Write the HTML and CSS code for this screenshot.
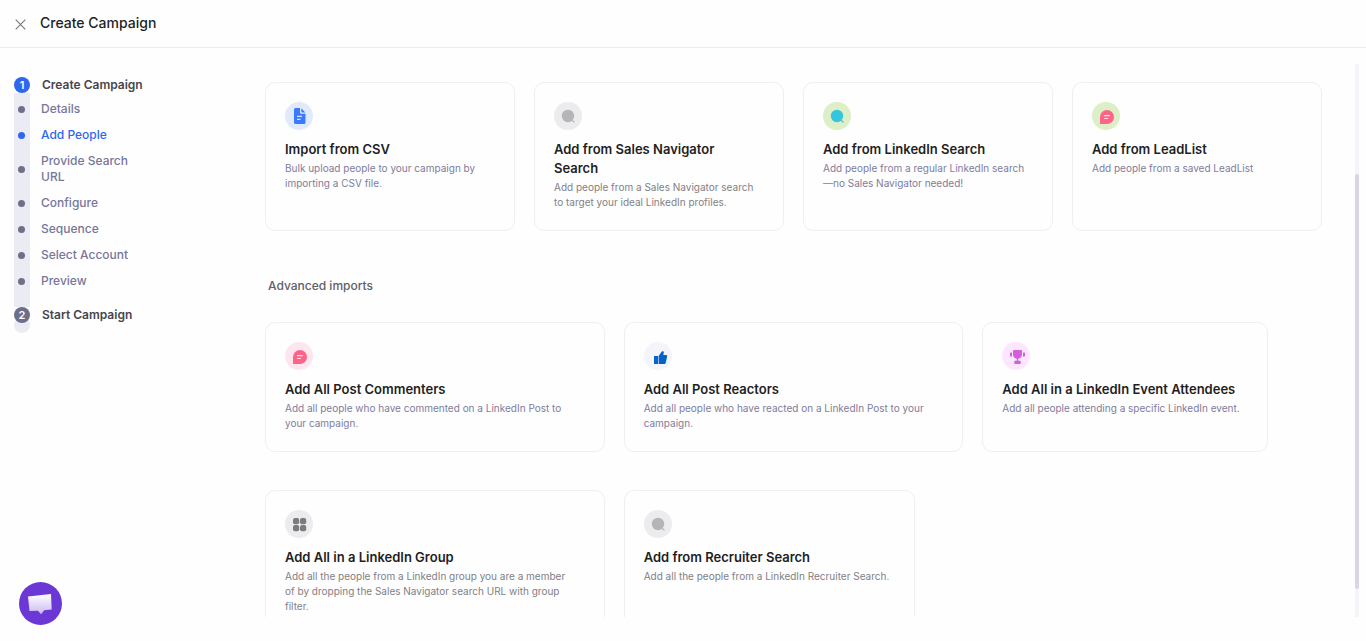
FILE: index.html
```
<!DOCTYPE html>
<html lang="en">

<head>
    <meta charset="UTF-8">
    <meta name="viewport" content="width=device-width, initial-scale=1.0">
    <title>Create Campaign</title>
    <link rel="stylesheet" href="styles.css">
</head>

<body>

    <header class="header">
        <button class="close-btn" aria-label="Close">
            <svg width="11" height="11" viewBox="0 0 11 11" fill="none" stroke="#77777c" stroke-width="1.1"><path d="M.7.7l9.6 9.6M10.3.7L.7 10.3"/></svg>
        </button>
        <h1 class="header-title">Create Campaign</h1>
    </header>

    <div class="layout">
        <nav class="steps">
            <div class="step"><span class="step-number active">1</span>Create Campaign</div>
            <ul class="step-list">
                <li><a class="step-link" href="#details">Details</a></li>
                <li><a class="step-link active" href="#people">Add People</a></li>
                <li><a class="step-link" href="#search-url">Provide Search URL</a></li>
                <li><a class="step-link" href="#configure">Configure</a></li>
                <li><a class="step-link" href="#sequence">Sequence</a></li>
                <li><a class="step-link" href="#account">Select Account</a></li>
                <li><a class="step-link" href="#preview">Preview</a></li>
            </ul>
            <div class="step step-last"><span class="step-number">2</span>Start Campaign</div>
        </nav>

        <main class="content">
            <div class="cards cards-basic">
                <button class="card">
                    <span class="icon icon-blue">
                        <svg width="28" height="28" viewBox="0 0 28 28"><path fill="#3b7afc" d="M10.5 6H15v4.2c0 .9.6 1.500 1.500 1.500H20.500V20.500a1.500 1.500 0 0 1-1.500 1.500h-8.500A1.500 1.500 0 0 1 9 20.500v-13A1.500 1.500 0 0 1 10.500 6z"/><path fill="#3b7afc" d="M16.300 6.300L20.300 10.400H17.200a.9.9 0 0 1-.9-.9z"/><path stroke="#d5e2ff" stroke-width="1.200" d="M12 14.300h5M12 17.300h3.500"/></svg>
                    </span>
                    <span class="card-title">Import from CSV</span>
                    <span class="card-text">Bulk upload people to your campaign by importing a CSV file.</span>
                </button>
                <button class="card">
                    <span class="icon icon-gray">
                        <svg width="28" height="28" viewBox="0 0 28 28"><circle cx="14" cy="14" r="6.200" fill="#b5b4b7"/><path stroke="#b5b4b7" stroke-width="1.200" stroke-linecap="round" d="M18.600 18.600l1.400 1.400"/></svg>
                    </span>
                    <span class="card-title">Add from Sales Navigator<br>Search</span>
                    <span class="card-text gray">Add people from a Sales Navigator search to target your ideal LinkedIn profiles.</span>
                </button>
                <button class="card">
                    <span class="icon icon-green">
                        <svg width="28" height="28" viewBox="0 0 28 28"><circle cx="14" cy="14" r="6.200" fill="#35c5dd"/><path stroke="#35c5dd" stroke-width="1.200" stroke-linecap="round" d="M18.600 18.600l1.400 1.400"/></svg>
                    </span>
                    <span class="card-title">Add from LinkedIn Search</span>
                    <span class="card-text">Add people from a regular LinkedIn search<br>—no Sales Navigator needed!</span>
                </button>
                <button class="card">
                    <span class="icon icon-green">
                        <svg width="28" height="28" viewBox="0 0 28 28"><path fill="#fd6488" d="M8 22v-7a7 7 0 1 1 7 7z"/><path stroke="#ffdbe4" stroke-width="1.200" stroke-linecap="round" d="M12.500 13.700h5M12.500 16.500h3"/></svg>
                    </span>
                    <span class="card-title">Add from LeadList</span>
                    <span class="card-text">Add people from a saved LeadList</span>
                </button>
            </div>

            <h2 class="section-title">Advanced imports</h2>

            <div class="cards cards-advanced">
                <button class="card">
                    <span class="icon icon-pink">
                        <svg width="28" height="28" viewBox="0 0 28 28"><path fill="#fd6488" d="M8 22v-7a7 7 0 1 1 7 7z"/><path stroke="#ffdbe4" stroke-width="1.200" stroke-linecap="round" d="M12.500 13.700h5M12.500 16.500h3"/></svg>
                    </span>
                    <span class="card-title">Add All Post Commenters</span>
                    <span class="card-text">Add all people who have commented on a LinkedIn Post to your campaign.</span>
                </button>
                <button class="card">
                    <span class="icon icon-light">
                        <svg width="28" height="28" viewBox="0 0 28 28" fill="#0464c8"><path d="M10 14h4v8h-3.500a.5.5 0 0 1-.5-.5z"/><path d="M14.600 14l3-4.200c.6-.8 2.400-.5 2.200.7l-.5 2.500h2.700c.9 0 1.300.6 1.100 1.400l-1.300 6.300c-.2.8-.8 1.300-1.600 1.300h-5.600z"/></svg>
                    </span>
                    <span class="card-title">Add All Post Reactors</span>
                    <span class="card-text">Add all people who have reacted on a LinkedIn Post to your campaign.</span>
                </button>
                <button class="card card-event">
                    <span class="icon icon-purple">
                        <svg width="28" height="28" viewBox="0 0 28 28" fill="#d65ddc"><path d="M12 8h7a1 1 0 0 1 1 1v3.500a4.500 4.300 0 0 1-9 0V9a1 1 0 0 1 1-1z"/><path d="M8.700 10.500H10v4H8.700a.7.7 0 0 1-.7-.7v-2.600a.7.7 0 0 1 .7-.7zM21 10.500h1.300a.7.7 0 0 1 .7.7v2.600a.7.7 0 0 1-.7.7H21zM14.800 16h1.400v3.500h-1.400z"/><rect x="12.300" y="18.800" width="6.400" height="3.200" rx=".8"/></svg>
                    </span>
                    <span class="card-title">Add All in a LinkedIn Event Attendees</span>
                    <span class="card-text">Add all people attending a specific LinkedIn event.</span>
                </button>
                <button class="card">
                    <span class="icon icon-gray">
                        <svg width="28" height="28" viewBox="0 0 28 28" fill="#7b7a7c"><rect x="8" y="8" width="6.200" height="6.200" rx="2"/><rect x="15" y="8" width="6.200" height="6.200" rx="2"/><rect x="8" y="15" width="6.200" height="6.200" rx="2"/><rect x="15" y="15" width="6.200" height="6.200" rx="2"/></svg>
                    </span>
                    <span class="card-title">Add All in a LinkedIn Group</span>
                    <span class="card-text gray">Add all the people from a LinkedIn group you are a member<br>of by dropping the Sales Navigator search URL with group<br>filter.</span>
                </button>
                <button class="card card-recruiter">
                    <span class="icon icon-gray">
                        <svg width="28" height="28" viewBox="0 0 28 28"><circle cx="14" cy="14" r="6.200" fill="#b5b4b7"/><path stroke="#b5b4b7" stroke-width="1.200" stroke-linecap="round" d="M18.600 18.600l1.400 1.400"/></svg>
                    </span>
                    <span class="card-title">Add from Recruiter Search</span>
                    <span class="card-text gray">Add all the people from a LinkedIn Recruiter Search.</span>
                </button>
            </div>
        </main>

        <div class="scroll-track">
            <div class="scroll-thumb"></div>
        </div>
    </div>

    <button class="chat-btn" aria-label="Open chat">
        <svg width="43" height="43" viewBox="0 0 43 43">
            <defs>
                <linearGradient id="bubble" x1="0" y1="0" x2="0" y2="1">
                    <stop offset="0" stop-color="#fff"/>
                    <stop offset="1" stop-color="#cbb9f2"/>
                </linearGradient>
            </defs>
            <path fill="url(#bubble)" d="M9 14.500L32 12l.7 15.500-7.500.8-3.200 4-3-3.500-8.500.2z"/>
        </svg>
    </button>

</body>

</html>
```
FILE: styles.css
```
* {
    box-sizing: border-box;
}

body,
html {
    height: 100%;
    margin: 0;
}

body {
    display: flex;
    flex-direction: column;
    overflow: hidden;
    background-color: #fefefe;
    color: #1f1f24;
    font-family: Inter, Arial, sans-serif;
}

button {
    font-family: inherit;
    color: inherit;
    background: none;
    border: none;
    padding: 0;
    cursor: pointer;
}

.header {
    display: flex;
    align-items: center;
    gap: 14px;
    height: 48px;
    padding: 0 15px;
    border-bottom: 1px solid #ebebed;
    flex-shrink: 0;
}

.close-btn {
    display: flex;
    padding-top: 2px;
}

.header-title {
    margin: 0 0 2px;
    font-size: 14px;
    font-weight: 500;
}

.layout {
    display: flex;
    flex: 1;
    min-height: 0;
    padding-bottom: 24px;
}

/* Left steps */
.steps {
    width: 265px;
    flex-shrink: 0;
    padding: 29px 0 0 14px;
    font-size: 12px;
    line-height: 16px;
    font-weight: 500;
}

.step {
    display: flex;
    align-items: center;
    gap: 12px;
    color: #47464e;
    font-weight: 600;
}

.step-last {
    align-items: flex-start;
}

/* rounded end of the rail under the last number */
.step-last .step-number {
    box-shadow: 0 10px 0 #ebecf3;
}

.step-number {
    width: 16px;
    height: 16px;
    border-radius: 50%;
    background-color: #6b6f8c;
    color: #fff;
    font-size: 11px;
    text-align: center;
}

.step-number.active {
    background-color: #2f66f0;
}

.step-list {
    display: flex;
    flex-direction: column;
    gap: 10px;
    margin: 0;
    padding: 8px 0 18px;
    list-style: none;
    background: linear-gradient(#ebecf3, #ebecf3) no-repeat 0 0 / 16px 100%;
}

.step-link {
    display: flex;
    align-items: center;
    gap: 16px;
    width: 130px;
    padding-left: 4px;
    color: #77769a;
    text-decoration: none;
}

.step-link::before {
    content: "";
    width: 7px;
    height: 7px;
    flex-shrink: 0;
    border-radius: 50%;
    background-color: #6f6f8a;
}

.step-link.active {
    color: #2f66f0;
}

.step-link.active::before {
    background-color: #2f66f0;
}

/* Cards */
.content {
    flex: 1;
    overflow: hidden;
    padding: 34px 33px 0 0;
}

.cards {
    display: grid;
    grid-template-columns: repeat(4, 1fr);
    gap: 38px 19px;
}

.cards-advanced {
    display: flex;
    flex-wrap: wrap;
}

.card {
    display: flex;
    flex-direction: column;
    align-items: flex-start;
    padding: 19px 19px 20px;
    border: 1px solid #efeef2;
    border-radius: 10px;
    text-align: left;
}

.cards-advanced .card {
    width: calc((100% - 38px) / 3);
}

.cards-advanced .card-event {
    width: 27%;
}

.cards-advanced .card-recruiter {
    width: 27.6%;
}

.icon {
    display: flex;
    width: 28px;
    height: 28px;
    margin-bottom: 10px;
    border-radius: 50%;
}

.icon-blue {
    background-color: #e1eafd;
}

.icon-gray {
    background-color: #ecebee;
}

.icon-green {
    background-color: #dcefc6;
}

.icon-pink {
    background-color: #ffe6ee;
}

.icon-light {
    background-color: #f4f4fb;
}

.icon-purple {
    background-color: #fde6ff;
}

.card-title {
    margin-bottom: 2px;
    font-size: 13px;
    line-height: 19px;
    font-weight: 600;
}

.card-text {
    font-size: 10px;
    line-height: 15px;
    color: #7f7c9c;
}

.card-text.gray {
    color: #828085;
}

.section-title {
    margin: 46px 3px 27px;
    font-size: 12px;
    line-height: 18px;
    font-weight: 500;
    color: #606066;
}

.scroll-track {
    width: 4px;
    margin: 16px 7px 0 0;
    background-color: #f5f4f9;
}

.scroll-thumb {
    height: 75%;
    margin-top: 110px;
    border-radius: 2px;
    background-color: #d8d6e4;
}

.chat-btn {
    position: fixed;
    left: 19px;
    bottom: 16px;
    display: flex;
    border-radius: 50%;
    background-color: #6b38d6;
}
```
